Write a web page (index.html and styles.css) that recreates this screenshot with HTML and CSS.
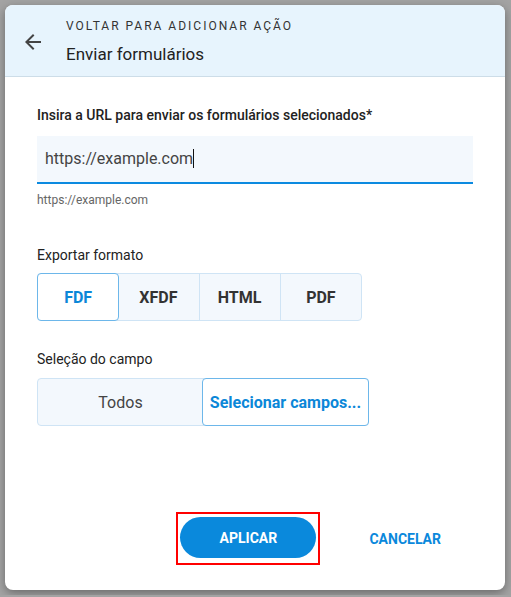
FILE: index.html
```html
<!DOCTYPE html>
<html lang="pt">
<head>
    <meta charset="UTF-8">
    <meta name="viewport" content="width=device-width, initial-scale=1.0">
    <title>Enviar formulários</title>
    <link rel="stylesheet" href="styles.css">
</head>
<body>

<div class="dialog">
    <!-- Header with back button -->
    <header class="dialog-header">
        <button class="back-button" aria-label="Voltar">
            <svg width="24" height="24" viewBox="0 0 24 24"><path d="M20 11H7.83l5.59-5.59L12 4l-8 8 8 8 1.41-1.41L7.83 13H20v-2z" fill="#444"/></svg>
        </button>
        <div class="header-text">
            <div class="subtitle">VOLTAR PARA ADICIONAR AÇÃO</div>
            <div class="title">Enviar formulários</div>
        </div>
    </header>

    <div class="dialog-body">
        <label class="field-label" for="url">Insira a URL para enviar os formulários selecionados*</label>
        <div class="input-box">
            <span class="input-text">https://example.com</span><span class="caret"></span>
        </div>
        <div class="helper">https://example.com</div>

        <div class="section-label">Exportar formato</div>
        <div class="segmented formats">
            <button class="segment selected">FDF</button>
            <button class="segment">XFDF</button>
            <button class="segment">HTML</button>
            <button class="segment">PDF</button>
        </div>

        <div class="section-label">Seleção do campo</div>
        <div class="segmented fields">
            <button class="segment light">Todos</button>
            <button class="segment selected">Selecionar campos...</button>
        </div>
    </div>

    <footer class="dialog-footer">
        <div class="highlight">
            <button class="apply-button">APLICAR</button>
        </div>
        <button class="cancel-button">CANCELAR</button>
    </footer>
</div>

</body>
</html>
```

FILE: styles.css
```css
/* Styles for the page */
body {
    margin: 0;
    padding: 5px;
    background-color: #a3a3a3;
    font-family: Roboto, "Liberation Sans", Arial, sans-serif;
    color: #222;
}
button {
    font-family: inherit;
    cursor: pointer;
}
.dialog {
    width: 500px;
    height: 585px;
    background: #ffffff;
    border-radius: 8px;
    box-shadow: 0 3px 10px rgba(0, 0, 0, 0.35);
    display: flex;
    flex-direction: column;
    overflow: hidden;
}
.dialog-header {
    height: 71px;
    background: #e7f4fd;
    border-bottom: 1px solid #cddde8;
    display: flex;
    align-items: center;
}
.back-button {
    background: none;
    border: none;
    padding: 0;
    margin: 0 21px 0 16px;
    width: 24px;
    height: 24px;
    display: flex;
    margin-top: 2px;
}
.header-text {
    display: flex;
    flex-direction: column;
}
.subtitle {
    font-size: 12px;
    letter-spacing: 2px;
    color: #333;
    margin-top: 1px;
}
.title {
    font-size: 17px;
    color: #222;
    margin-top: 11px;
}
.dialog-body {
    flex: 1;
    padding: 0 32px;
}
.field-label {
    display: block;
    font-size: 14px;
    font-weight: 500;
    margin-top: 30px;
    line-height: 16px;
}
.input-box {
    margin-top: 13px;
    background: #f3f8fd;
    border-bottom: 2px solid #0b8ae0;
    display: flex;
    align-items: center;
    padding-left: 8px;
    padding-bottom: 2px;
    height: 44px;
}
.input-text {
    font-size: 16px;
    color: #444;
}
.caret {
    display: inline-block;
    width: 1px;
    height: 19px;
    background: #111;
}
.helper {
    font-size: 12px;
    color: #666;
    margin-top: 9px;
}
.section-label {
    font-size: 14px;
    margin-top: 40px;
    line-height: 16px;
}
.segmented {
    display: flex;
    height: 48px;
    background: #f3f8fd;
    border: 1px solid #cfe4f5;
    border-radius: 4px;
    box-sizing: border-box;
}
.formats {
    width: 325px;
    margin-top: 10px;
    margin-bottom: -10px;
}
.fields {
    width: 332px;
    margin-top: 11px;
}
.segment {
    flex: 1;
    background: none;
    border: none;
    border-left: 1px solid #cfe4f5;
    font-size: 16px;
    font-weight: 700;
    color: #333;
    padding: 0;
}
.segment:first-child {
    border-left: none;
}
.segment.light {
    font-weight: 400;
    color: #444;
}
.segment.selected {
    background: #ffffff;
    color: #0b87d8;
    border: 1px solid #6db7ea;
    border-radius: 4px;
    margin: -1px;
}
.segment.selected + .segment {
    border-left: none;
}
.dialog-footer {
    display: flex;
    justify-content: flex-end;
    align-items: center;
    gap: 21px;
    padding: 0 36px 25px 0;
}
.highlight {
    border: 2px solid #ff0000;
    padding: 3px 2px 5px 2px;
    display: flex;
}
.apply-button {
    width: 136px;
    height: 41px;
    border: none;
    border-radius: 21px;
    background: #0a89dc;
    color: #ffffff;
    font-size: 14px;
    font-weight: 700;
}
.cancel-button {
    background: none;
    border: none;
    color: #0a88dc;
    font-size: 14px;
    font-weight: 700;
    padding: 10px 28px;
}
```
